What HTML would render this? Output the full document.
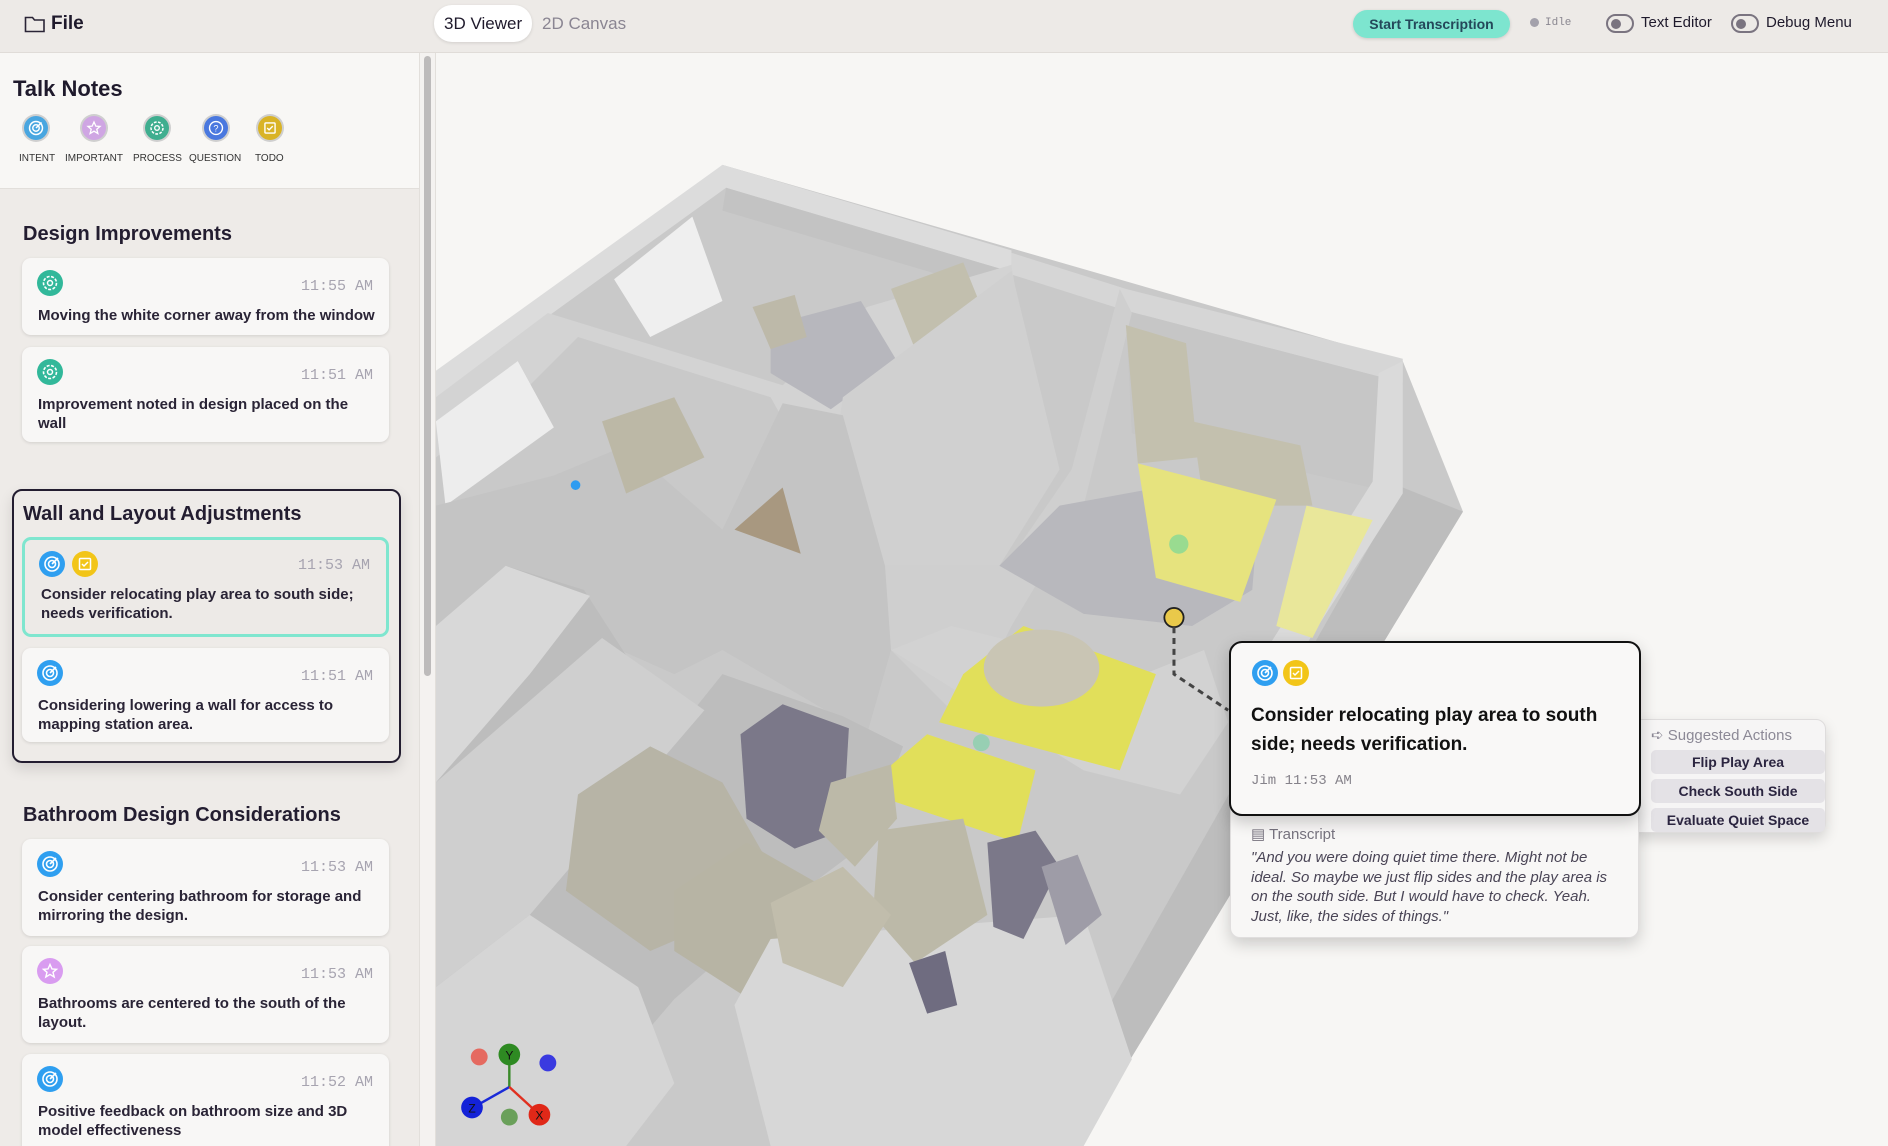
<!DOCTYPE html>
<html><head><meta charset="utf-8"><style>
*{box-sizing:border-box;margin:0;padding:0}
body{width:1888px;height:1146px;overflow:hidden;background:#f7f6f4;font-family:"Liberation Sans",sans-serif;color:#1f1a2c;position:relative}
.hdr{position:absolute;left:0;top:0;width:1888px;height:53px;background:#edeae7;border-bottom:1px solid #e0dcd8;z-index:5}
.abs{position:absolute}
.side{position:absolute;left:0;top:53px;width:419px;height:1093px;background:#eeebe8;overflow:hidden}
.card{position:absolute;left:22px;width:367px;background:#f8f7f6;border-radius:9px;box-shadow:0 1px 3px rgba(0,0,0,.12)}
.card .t{position:absolute;right:16px;top:20px;font-family:"Liberation Mono",monospace;font-size:15px;color:#a7a4b0}
.card .x{position:absolute;left:16px;width:336px;font-size:15px;font-weight:bold;line-height:19px;color:#2a2436}
.ic{position:absolute;width:26px;height:26px;border-radius:50%}
.ic svg{position:absolute;left:0;top:0;width:100%;height:100%}
h3{position:absolute;left:23px;font-size:20px;font-weight:bold;color:#231d30}
.sa{position:absolute;left:20px;width:174px;height:24px;background:#e4e2e6;border-radius:5px;font-size:14px;font-weight:bold;text-align:center;line-height:24px;color:#2b2540}
</style></head><body>
<svg width="0" height="0" style="position:absolute">
<defs>
<g id="tg"><circle cx="13" cy="13" r="7" fill="none" stroke="#fff" stroke-width="1.6"/><circle cx="13" cy="13" r="3.5" fill="none" stroke="#fff" stroke-width="1.6"/><path d="M13 13 L19 7" stroke="#fff" stroke-width="1.6"/></g>
<g id="td"><rect x="7.5" y="7.5" width="11" height="11" rx="1" fill="none" stroke="#fff" stroke-width="1.5"/><path d="M10 13 l2 2 l4 -4" fill="none" stroke="#fff" stroke-width="1.5"/></g>
<g id="gr"><circle cx="13" cy="13" r="6.5" fill="none" stroke="#fff" stroke-width="1.6" stroke-dasharray="3 1.5"/><circle cx="13" cy="13" r="2.5" fill="none" stroke="#fff" stroke-width="1.5"/></g>
<g id="st"><path d="M13 6.5 L15 11 L19.5 11.3 L16 14.3 L17.2 19 L13 16.4 L8.8 19 L10 14.3 L6.5 11.3 L11 11 Z" fill="none" stroke="#fff" stroke-width="1.4"/></g>
<g id="qu"><circle cx="13" cy="13" r="7" fill="none" stroke="#fff" stroke-width="1.5"/><text x="13" y="17" font-size="10" text-anchor="middle" fill="#fff" font-family="Liberation Sans">?</text></g>
</defs></svg>
<svg class="abs" style="left:0;top:0" width="1888" height="1146" viewBox="0 0 1568 952" preserveAspectRatio="none">
<polygon points="362,330 600,137 1165,300 1215,425 895,952 362,952" fill="#c9c9c9"/>
<polygon points="1165,405 1215,425 895,952 855,952" fill="#bdbdbd"/>
<polygon points="362,308 600,137 840,208 840,226 603,156 362,330" fill="#dcdcdc"/>
<polygon points="603,156 840,226 820,240 600,175" fill="#c3c3c3"/>
<polygon points="840,210 935,240 1165,298 1165,318 935,258 840,228" fill="#d6d6d6"/>
<polygon points="935,258 1165,318 1160,410 940,360" fill="#c6c6c6"/>
<polygon points="1165,300 1165,410 1050,590 1020,590 1140,400 1145,310" fill="#dadada"/>
<polygon points="455,260 650,320 720,255 840,220 860,345 770,400 690,420 640,330 480,280 430,330 362,380 362,330" fill="#d3d3d3"/>
<polygon points="510,232 575,180 600,250 540,280" fill="#efefef"/>
<polygon points="362,350 430,300 460,355 370,420" fill="#ededed"/>
<polygon points="640,270 715,250 745,300 690,340 640,310" fill="#b7b7bd"/>
<polygon points="625,255 660,245 670,280 640,290" fill="#bdb9a9"/>
<polygon points="740,240 800,218 815,255 760,290" fill="#c2bfae"/>
<polygon points="755,320 780,305 790,345 765,350" fill="#bcb8a6"/>
<polygon points="810,330 835,322 838,350 815,356" fill="#bcb8a6"/>
<polygon points="700,330 840,225 880,390 830,470 720,470 690,400" fill="#d0d0d0"/>
<polygon points="720,470 835,470 890,390 930,240 940,260 900,420 840,520 800,600 740,540" fill="#cfcfcf"/>
<polygon points="600,440 650,335 700,345 735,470 740,540 720,610 600,540 560,560 470,520 400,560 362,600 362,420 460,395 520,370" fill="#c4c4c4"/>
<polygon points="610,440 650,405 665,460" fill="#a89880"/>
<polygon points="500,350 560,330 585,380 520,410" fill="#bcb8a6"/>
<polygon points="362,520 420,470 485,490 530,560 560,610 600,560 700,595 750,620 720,700 640,760 560,830 500,900 430,952 362,952" fill="#bdbdbd"/>
<polygon points="362,520 420,470 490,495 440,560 362,650" fill="#d8d8d8"/>
<polygon points="362,650 500,530 585,590 525,660 440,760 362,820" fill="#cfcfcf"/>
<polygon points="362,820 440,760 530,820 560,900 520,952 362,952" fill="#d5d5d5"/>
<polygon points="480,660 540,620 600,650 640,720 610,760 540,790 470,740" fill="#b7b4a6"/>
<polygon points="560,740 620,700 690,740 680,800 630,835 560,790" fill="#b7b4a4"/>
<polygon points="610,835 640,780 900,760 940,880 900,952 640,952" fill="#d7d7d7"/>
<polygon points="740,540 790,520 950,560 1000,540 1020,600 980,660 900,640" fill="#d2d2d2"/>
<polygon points="830,470 880,420 990,400 1045,430 1040,490 990,520 900,510" fill="#b8b8bd"/>
<polygon points="935,270 985,285 995,380 945,385" fill="#c3c0ae"/>
<polygon points="990,350 1080,370 1090,420 1000,420" fill="#c3c0ae"/>
<polygon points="945,385 1060,415 1030,500 960,480" fill="#e6e37e"/>
<polygon points="1085,420 1140,432 1090,530 1060,520" fill="#e9e79a"/>
<polygon points="800,560 850,520 960,560 930,640 780,600" fill="#e1df5a"/>
<polygon points="735,640 770,610 860,640 845,700 740,665" fill="#e1df5a"/>
<ellipse cx="865" cy="555" rx="48" ry="32" fill="#c9c5b4"/>
<polygon points="615,610 650,585 705,605 700,690 660,705 620,680" fill="#7b7889"/>
<polygon points="690,650 740,635 745,680 710,720 680,690" fill="#bcb9a8"/>
<polygon points="730,690 800,680 820,760 760,800 725,760" fill="#bcb9a8"/>
<polygon points="820,700 860,690 880,720 850,780 825,770" fill="#7b7889"/>
<polygon points="865,720 895,710 915,760 885,785" fill="#9e9ca7"/>
<polygon points="755,800 785,790 795,835 770,842" fill="#6f6c80"/>
<polygon points="640,750 700,720 740,760 700,820 650,800" fill="#c1bdac"/>
<circle cx="478" cy="403" r="4" fill="#2f9cf0"/>
<circle cx="979" cy="452" r="8" fill="#66d69d" opacity=".6"/>
<circle cx="815" cy="617" r="7" fill="#66d69d" opacity=".5"/>
<circle cx="975" cy="513" r="8" fill="#e9c94a" stroke="#222" stroke-width="1.5"/>
<path d="M975 521 V560 L1020 590" stroke="#444" stroke-width="2.5" stroke-dasharray="5 4" fill="none"/>
<line x1="423" y1="877" x2="423" y2="903" stroke="#3a8a2a" stroke-width="2"/>
<line x1="423" y1="903" x2="393" y2="920" stroke="#1a2ad8" stroke-width="2"/>
<line x1="423" y1="903" x2="447" y2="925" stroke="#e03020" stroke-width="2"/>
<circle cx="398" cy="878" r="7" fill="#e56a60"/><circle cx="455" cy="883" r="7" fill="#3a3ae0"/>
<circle cx="423" cy="928" r="7" fill="#6aa05a"/>
<circle cx="423" cy="876" r="9" fill="#2e8a22"/><text x="423" y="880" font-size="10" text-anchor="middle" fill="#111" font-family="Liberation Sans">Y</text>
<circle cx="392" cy="920" r="9" fill="#1422d8"/><text x="392" y="924" font-size="10" text-anchor="middle" fill="#111" font-family="Liberation Sans">Z</text>
<circle cx="448" cy="926" r="9" fill="#e02818"/><text x="448" y="930" font-size="10" text-anchor="middle" fill="#111" font-family="Liberation Sans">X</text>
</svg>

<div class="hdr">
<svg class="abs" style="left:24px;top:15px" width="22" height="18" viewBox="0 0 22 18"><path d="M1.5 2.5h7l2 2.5h9.5v11.5h-18.5z" fill="none" stroke="#2a2436" stroke-width="1.6"/></svg>
<div class="abs" style="left:51px;top:13px;font-size:19px;font-weight:bold">File</div>
<div class="abs" style="left:434px;top:5px;width:98px;height:37px;background:#fff;border-radius:18px;box-shadow:0 1px 3px rgba(0,0,0,.12)"></div>
<div class="abs" style="left:444px;top:14px;font-size:17px">3D Viewer</div>
<div class="abs" style="left:542px;top:14px;font-size:17px;color:#8a8592">2D Canvas</div>
<div class="abs" style="left:1353px;top:10px;width:157px;height:28px;background:#7de5cf;border-radius:14px;box-shadow:0 1px 3px rgba(0,0,0,.15);text-align:center;line-height:28px;font-size:14px;font-weight:bold;color:#24485a">Start Transcription</div>
<div class="abs" style="left:1530px;top:18px;width:9px;height:9px;border-radius:50%;background:#a3a1ab"></div>
<div class="abs" style="left:1545px;top:17px;font-family:'Liberation Mono',monospace;font-size:11px;color:#8a8790">Idle</div>
<div class="abs" style="left:1606px;top:14px;width:28px;height:19px;border:2px solid #7a7480;border-radius:10px"><div style="margin:3px;width:10px;height:10px;border-radius:50%;background:#7a7480"></div></div>
<div class="abs" style="left:1641px;top:14px;font-size:15px">Text Editor</div>
<div class="abs" style="left:1731px;top:14px;width:28px;height:19px;border:2px solid #7a7480;border-radius:10px"><div style="margin:3px;width:10px;height:10px;border-radius:50%;background:#7a7480"></div></div>
<div class="abs" style="left:1766px;top:14px;font-size:15px">Debug Menu</div>
</div>

<div class="side">
<div class="abs" style="left:0;top:0;width:419px;height:136px;background:#f8f7f5;border-bottom:1px solid #e2dfdb"></div>
<div class="abs" style="left:13px;top:23px;font-size:22px;font-weight:bold">Talk Notes</div>
<div class="ic" style="left:24px;top:63px;width:24px;height:24px;background:#49a6e0;box-shadow:0 0 0 2px #cfcfcf"><svg viewBox="0 0 26 26"><use href="#tg"/></svg></div>
<div class="ic" style="left:82px;top:63px;width:24px;height:24px;background:#cfa6e3;box-shadow:0 0 0 2px #cfcfcf"><svg viewBox="0 0 26 26"><use href="#st"/></svg></div>
<div class="ic" style="left:145px;top:63px;width:24px;height:24px;background:#3fae8f;box-shadow:0 0 0 2px #cfcfcf"><svg viewBox="0 0 26 26"><use href="#gr"/></svg></div>
<div class="ic" style="left:204px;top:63px;width:24px;height:24px;background:#4a78df;box-shadow:0 0 0 2px #cfcfcf"><svg viewBox="0 0 26 26"><use href="#qu"/></svg></div>
<div class="ic" style="left:258px;top:63px;width:24px;height:24px;background:#d9b326;box-shadow:0 0 0 2px #cfcfcf"><svg viewBox="0 0 26 26"><use href="#td"/></svg></div>
<div class="abs" style="top:100px;left:0;font-size:10px;color:#333;width:419px">
<span class="abs" style="left:19px">INTENT</span><span class="abs" style="left:65px">IMPORTANT</span><span class="abs" style="left:133px">PROCESS</span><span class="abs" style="left:189px">QUESTION</span><span class="abs" style="left:255px">TODO</span></div>

<h3 style="top:170px">Design Improvements</h3>
<div class="card" style="top:205px;height:77px"><div class="ic" style="left:15px;top:12px;background:#32b89a"><svg viewBox="0 0 26 26"><use href="#gr"/></svg></div><div class="t">11:55 AM</div><div class="x" style="top:48px;width:360px;white-space:nowrap">Moving the white corner away from the window</div></div>
<div class="card" style="top:294px;height:95px"><div class="ic" style="left:15px;top:12px;background:#32b89a"><svg viewBox="0 0 26 26"><use href="#gr"/></svg></div><div class="t">11:51 AM</div><div class="x" style="top:48px;width:320px">Improvement noted in design placed on the wall</div></div>

<div class="abs" style="left:12px;top:436px;width:389px;height:274px;border:2.5px solid #231d30;border-radius:10px;box-shadow:0 6px 14px rgba(0,0,0,.12)"></div>
<h3 style="top:450px">Wall and Layout Adjustments</h3>
<div class="card" style="top:484px;height:100px;background:#edeae7;border:3px solid #7fe6cf;box-shadow:none"><div class="ic" style="left:14px;top:11px;background:#2f9ff0"><svg viewBox="0 0 26 26"><use href="#tg"/></svg></div><div class="ic" style="left:47px;top:11px;background:#f2c518"><svg viewBox="0 0 26 26"><use href="#td"/></svg></div><div class="t" style="top:17px">11:53 AM</div><div class="x" style="top:45px">Consider relocating play area to south side; needs verification.</div></div>
<div class="card" style="top:595px;height:94px"><div class="ic" style="left:15px;top:12px;background:#2f9ff0"><svg viewBox="0 0 26 26"><use href="#tg"/></svg></div><div class="t">11:51 AM</div><div class="x" style="top:48px">Considering lowering a wall for access to mapping station area.</div></div>

<h3 style="top:751px">Bathroom Design Considerations</h3>
<div class="card" style="top:786px;height:97px"><div class="ic" style="left:15px;top:12px;background:#2f9ff0"><svg viewBox="0 0 26 26"><use href="#tg"/></svg></div><div class="t">11:53 AM</div><div class="x" style="top:48px">Consider centering bathroom for storage and mirroring the design.</div></div>
<div class="card" style="top:893px;height:97px"><div class="ic" style="left:15px;top:12px;background:#d99cf0"><svg viewBox="0 0 26 26"><use href="#st"/></svg></div><div class="t">11:53 AM</div><div class="x" style="top:48px">Bathrooms are centered to the south of the layout.</div></div>
<div class="card" style="top:1001px;height:110px"><div class="ic" style="left:15px;top:12px;background:#2f9ff0"><svg viewBox="0 0 26 26"><use href="#tg"/></svg></div><div class="t">11:52 AM</div><div class="x" style="top:48px">Positive feedback on bathroom size and 3D model effectiveness</div></div>
</div>
<div class="abs" style="left:419px;top:53px;width:17px;height:1093px;background:#f4f2f0;border-left:1px solid #e2dfdb;border-right:1px solid #e2dfdb"></div>
<div class="abs" style="left:424px;top:56px;width:7px;height:620px;background:#bdbbbb;border-radius:4px"></div>

<div class="abs" style="left:1630px;top:719px;width:196px;height:114px;background:#f6f5f5;border:1px solid #dedcdc;border-radius:10px;box-shadow:0 6px 14px rgba(0,0,0,.15)">
<div class="abs" style="left:20px;top:6px;font-size:15px;color:#8c8996">➪ Suggested Actions</div>
<div class="sa" style="top:30px">Flip Play Area</div><div class="sa" style="top:59px">Check South Side</div><div class="sa" style="top:88px">Evaluate Quiet Space</div></div>
<div class="abs" style="left:1230px;top:800px;width:409px;height:138px;background:#f8f7f6;border:1px solid #e0dede;border-radius:10px;box-shadow:0 6px 16px rgba(0,0,0,.18)">
<div class="abs" style="left:20px;top:24px;font-size:15px;color:#77737f">▤ Transcript</div>
<div class="abs" style="left:20px;top:47px;width:372px;font-size:15px;font-style:italic;line-height:19.5px;color:#4a4556">"And you were doing quiet time there. Might not be ideal. So maybe we just flip sides and the play area is on the south side. But I would have to check. Yeah. Just, like, the sides of things."</div></div>
<div class="abs" style="left:1229px;top:641px;width:412px;height:175px;background:#f9f8f7;border:2.5px solid #111;border-radius:13px;box-shadow:0 6px 16px rgba(0,0,0,.2)">
<div class="ic" style="left:21px;top:17px;background:#2f9ff0"><svg viewBox="0 0 26 26"><use href="#tg"/></svg></div><div class="ic" style="left:52px;top:17px;background:#f2c518"><svg viewBox="0 0 26 26"><use href="#td"/></svg></div>
<div class="abs" style="left:20px;top:58px;width:380px;font-size:19px;font-weight:bold;line-height:29px;color:#111">Consider relocating play area to south side; needs verification.</div>
<div class="abs" style="left:20px;top:130px;font-family:'Liberation Mono',monospace;font-size:14px;color:#85828a">Jim 11:53 AM</div></div>
</body></html>
